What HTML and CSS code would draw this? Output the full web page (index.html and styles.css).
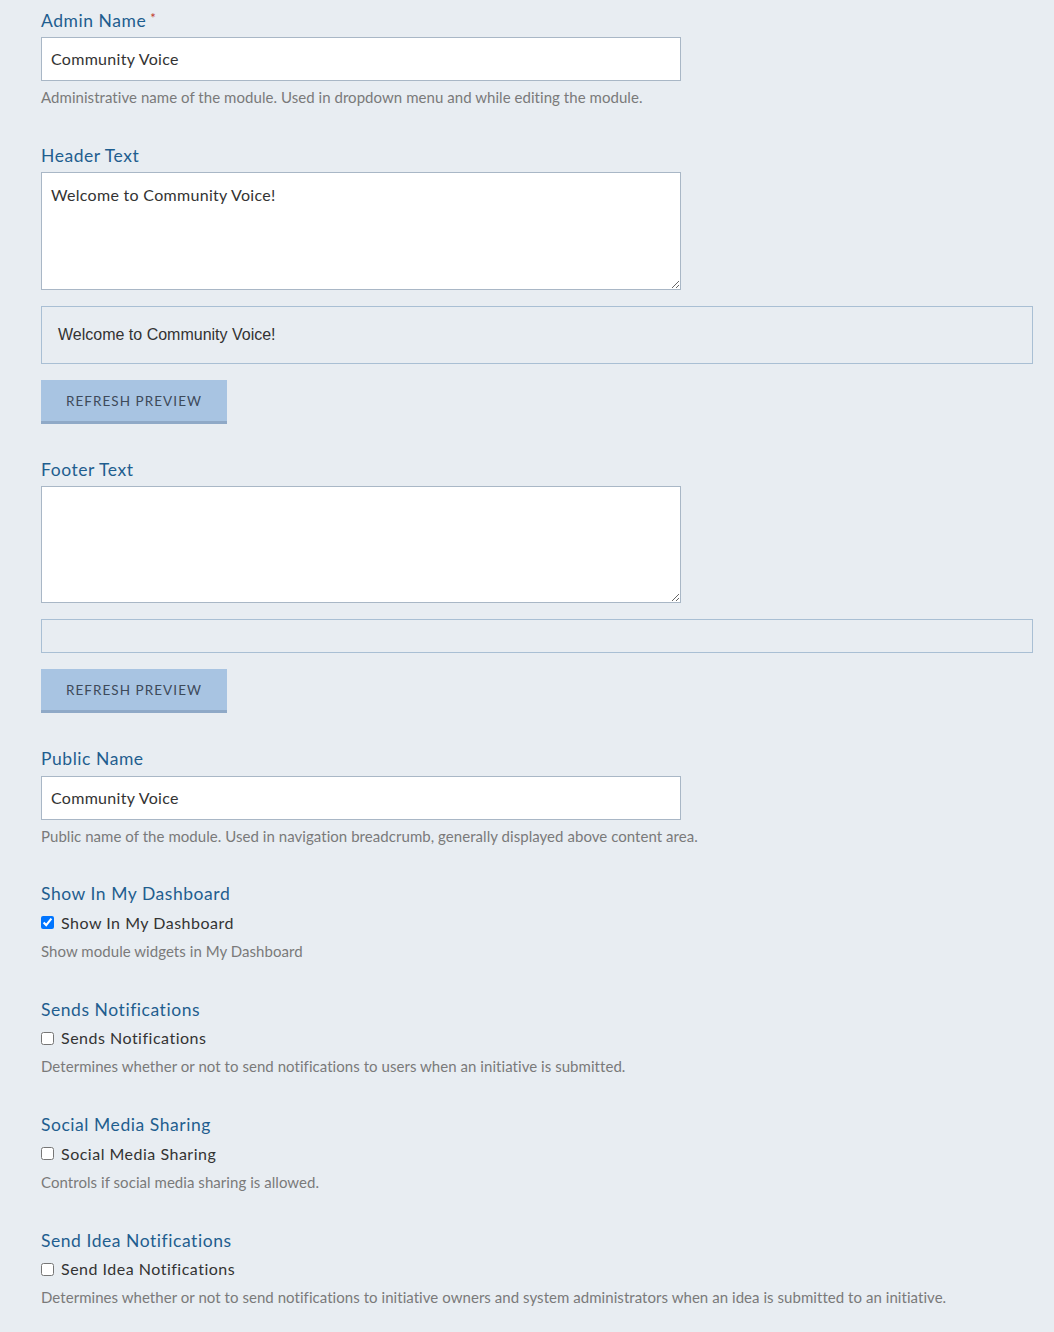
FILE: index.html
```html
<!DOCTYPE html>
<html lang="en">
<head>
<meta charset="utf-8">
<title>Module Settings</title>
<link rel="stylesheet" href="styles.css">
</head>
<body>
<form class="form">
  <div class="field">
    <label class="label" for="admin-name">Admin Name<span class="req">*</span></label>
    <input class="input" id="admin-name" type="text" value="Community Voice">
    <p class="help">Administrative name of the module. Used in dropdown menu and while editing the module.</p>
  </div>

  <div class="field field-btn">
    <label class="label" for="header-text">Header Text</label>
    <textarea class="textarea" id="header-text">Welcome to Community Voice!</textarea>
    <div class="preview">Welcome to Community Voice!</div>
    <button class="btn" type="button">Refresh Preview</button>
  </div>

  <div class="field field-btn">
    <label class="label" for="footer-text">Footer Text</label>
    <textarea class="textarea textarea-footer" id="footer-text"></textarea>
    <div class="preview preview-empty"></div>
    <button class="btn" type="button">Refresh Preview</button>
  </div>

  <div class="field field-pub">
    <label class="label label-pub" for="public-name">Public Name</label>
    <input class="input" id="public-name" type="text" value="Community Voice">
    <p class="help">Public name of the module. Used in navigation breadcrumb, generally displayed above content area.</p>
  </div>

  <div class="field field-check">
    <div class="label">Show In My Dashboard</div>
    <label class="check"><input type="checkbox" checked><span>Show In My Dashboard</span></label>
    <p class="help help-check">Show module widgets in My Dashboard</p>
  </div>

  <div class="field field-check">
    <div class="label">Sends Notifications</div>
    <label class="check"><input type="checkbox"><span>Sends Notifications</span></label>
    <p class="help help-check">Determines whether or not to send notifications to users when an initiative is submitted.</p>
  </div>

  <div class="field field-check">
    <div class="label">Social Media Sharing</div>
    <label class="check"><input type="checkbox"><span>Social Media Sharing</span></label>
    <p class="help help-check">Controls if social media sharing is allowed.</p>
  </div>

  <div class="field field-check">
    <div class="label">Send Idea Notifications</div>
    <label class="check"><input type="checkbox"><span>Send Idea Notifications</span></label>
    <p class="help help-check">Determines whether or not to send notifications to initiative owners and system administrators when an idea is submitted to an initiative.</p>
  </div>
</form>
</body>
</html>
```

FILE: styles.css
```css
html, body {
  margin: 0;
  padding: 0;
}
body {
  background: #e8edf2;
  font-family: Lato, "Open Sans", Arial, sans-serif;
  color: #333;
  padding: 8px 21px 0 41px;
  min-height: 1332px;
  box-sizing: border-box;
}
.form {
  display: flex;
  flex-direction: column;
}
.field {
  display: flex;
  flex-direction: column;
  align-items: flex-start;
  margin-bottom: 36px;
}
.field-btn {
  margin-bottom: 33px;
}
.field-pub {
  margin-bottom: 35px;
}
.field-check {
  margin-bottom: 36px;
}
.label {
  display: block;
  font-size: 17.5px;
  line-height: 24px;
  letter-spacing: 0.55px;
  color: #1f5e8f;
  padding-top: 1px;
  margin: 0 0 4px 0;
}
.label-pub {
  margin-bottom: 5px;
}
.req {
  color: #c0392b;
  font-size: 13px;
  margin-left: 4px;
  vertical-align: top;
  position: relative;
  top: -3px;
}
.input {
  box-sizing: border-box;
  width: 640px;
  height: 44px;
  border: 1px solid #a9b7c6;
  background: #fff;
  padding: 0 9px 2px 9px;
  font-family: inherit;
  font-size: 16px;
  letter-spacing: 0.3px;
  color: #333;
  margin: 0;
  outline: none;
}
.textarea {
  box-sizing: border-box;
  width: 640px;
  height: 118px;
  border: 1px solid #a9b7c6;
  background: #fff;
  padding: 10px 9px;
  font-family: inherit;
  font-size: 16px;
  letter-spacing: 0.3px;
  line-height: 24px;
  color: #333;
  margin: 0;
  resize: vertical;
  outline: none;
  display: block;
}
.textarea-footer {
  height: 117px;
}
.help {
  margin: 6px 0 0 0;
  font-size: 15px;
  line-height: 20px;
  letter-spacing: 0.05px;
  color: #7a7a7a;
}
.help-check {
  margin-top: 8px;
}
.preview {
  box-sizing: border-box;
  align-self: stretch;
  height: 58px;
  margin-top: 16px;
  border: 1px solid #a9bfd4;
  padding: 0 16px;
  display: flex;
  align-items: center;
  font-family: "Liberation Sans", Arial, sans-serif;
  font-size: 16px;
  color: #333;
}
.preview-empty {
  height: 34px;
}
.btn {
  margin-top: 16px;
  box-sizing: border-box;
  height: 44px;
  width: 186px;
  padding: 1px 0 0 0;
  border: 0;
  border-bottom: 3px solid #8fa9c7;
  background: #a8c4e2;
  font-family: inherit;
  font-size: 13.5px;
  letter-spacing: 1.05px;
  text-transform: uppercase;
  color: #3d4a5a;
}
.check {
  display: flex;
  align-items: center;
  margin-top: 2.5px;
  font-size: 16px;
  line-height: 20px;
  letter-spacing: 0.5px;
  color: #333;
}
.check input {
  margin: 0 7px 0 0;
  width: 13px;
  height: 13px;
}
```
